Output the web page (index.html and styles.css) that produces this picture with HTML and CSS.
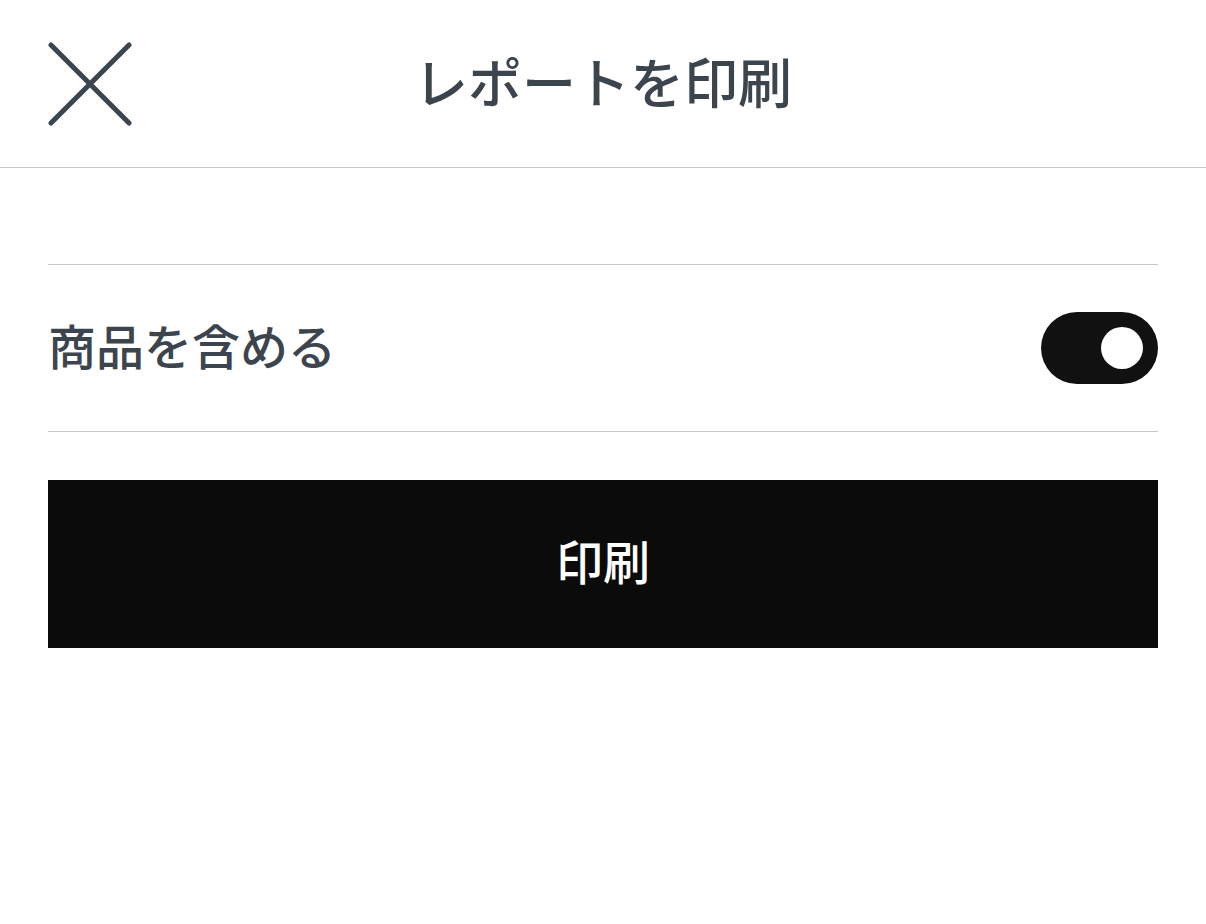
FILE: index.html
```html
<!DOCTYPE html>
<html lang="ja">
<head>
<meta charset="utf-8">
<title>レポートを印刷</title>
<link rel="stylesheet" href="styles.css">
</head>
<body>
<header class="header">
  <button class="close" aria-label="閉じる">
    <svg width="84" height="84" viewBox="0 0 84 84">
      <path d="M3 3 L81 81 M81 3 L3 81" stroke="#3c454d" stroke-width="5" stroke-linecap="round" fill="none"/>
    </svg>
  </button>
  <h1 class="title">レポートを印刷</h1>
</header>
<main class="content">
  <div class="row">
    <span class="label">商品を含める</span>
    <span class="toggle"><span class="knob"></span></span>
  </div>
  <button class="print"><span class="print-text">印刷</span></button>
</main>
</body>
</html>
```
FILE: styles.css
```css
html, body {
  margin: 0;
  padding: 0;
  background: #fff;
  font-family: "Noto Sans CJK JP", "Noto Sans", sans-serif;
  color: #3c454d;
}
.header {
  height: 167px;
  border-bottom: 1px solid #c8c8c8;
  display: flex;
  align-items: center;
  justify-content: center;
  position: relative;
}
.close {
  position: absolute;
  left: 48px;
  top: 42px;
  width: 84px;
  height: 84px;
  padding: 0;
  border: 0;
  background: none;
  display: flex;
}
.title {
  margin: 0;
  font-size: 54px;
  font-weight: 500;
  line-height: 1;
  color: #3c454d;
  transform: translateY(-3px);
}
.content {
  padding: 96px 48px 0;
}
.row {
  border-top: 1px solid #c8c8c8;
  border-bottom: 1px solid #c8c8c8;
  height: 166px;
  display: flex;
  align-items: center;
  justify-content: space-between;
}
.label {
  font-size: 48px;
  font-weight: 500;
  line-height: 1;
  color: #3c454d;
  transform: translateY(-4px);
}
.toggle {
  width: 117px;
  height: 72px;
  border-radius: 36px;
  background: #111;
  display: flex;
  align-items: center;
  justify-content: flex-end;
  padding-right: 15px;
  box-sizing: border-box;
}
.knob {
  width: 42px;
  height: 42px;
  border-radius: 50%;
  background: #fff;
}
.print {
  margin-top: 48px;
  width: 100%;
  height: 168px;
  border: 0;
  background: #0b0b0b;
  color: #fff;
  font-family: inherit;
  font-size: 47px;
  font-weight: 500;
  display: flex;
  align-items: center;
  justify-content: center;
  padding: 0;
}
.print-text {
  line-height: 1;
  transform: translateY(-5px);
}
```
